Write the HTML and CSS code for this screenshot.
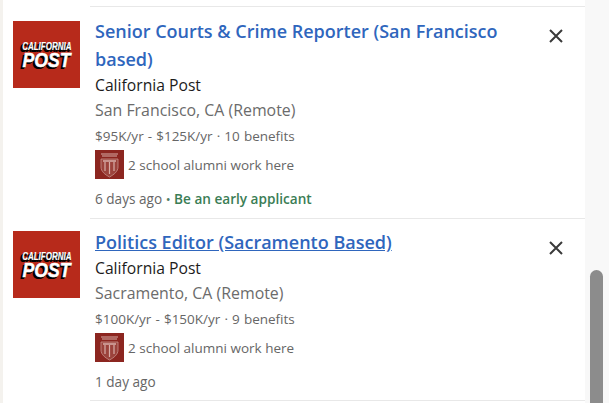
FILE: index.html
```html
<!DOCTYPE html>
<html lang="en">
<head>
<meta charset="utf-8">
<title>Jobs</title>
<link rel="stylesheet" href="styles.css">
</head>
<body>
<div class="pane">
  <main class="list">
    <article class="job">
      <div class="logo"><span class="logo-top">CALIFORNIA</span><span class="logo-main">POST</span></div>
      <div class="body">
        <h2 class="title"><a href="#">Senior Courts &amp; Crime Reporter (San Francisco based)</a></h2>
        <div class="company">California Post</div>
        <div class="location">San Francisco, CA (Remote)</div>
        <div class="meta">$95K/yr - $125K/yr · 10 benefits</div>
        <div class="alumni">
          <svg class="seal" viewBox="0 0 29 29"><rect width="29" height="29" fill="#8c2620"/><path d="M6 4h17M7 6h15" stroke="#bd8079" stroke-width="1.500"/><path d="M6 9h17v8c0 4.500-4 7.500-8.500 10C10 24.500 6 21.500 6 17z" fill="#9c433c" stroke="#c8928b" stroke-width=".8"/><path d="M8 11h13" stroke="#d8aea8" stroke-width="1.500"/><path d="M10 12v9M14.500 12v12M19 12v9" stroke="#d8aea8" stroke-width="1.200"/></svg>
          <span>2 school alumni work here</span>
        </div>
        <div class="foot">6 days ago <span class="dot">•</span> <strong>Be an early applicant</strong></div>
      </div>
      <svg class="close" viewBox="0 0 16 16"><path d="M2 2l12 12M14 2L2 14"/></svg>
    </article>
    <article class="job second">
      <div class="logo"><span class="logo-top">CALIFORNIA</span><span class="logo-main">POST</span></div>
      <div class="body">
        <h2 class="title"><a class="hover" href="#">Politics Editor (Sacramento Based)</a></h2>
        <div class="company">California Post</div>
        <div class="location">Sacramento, CA (Remote)</div>
        <div class="meta">$100K/yr - $150K/yr · 9 benefits</div>
        <div class="alumni">
          <svg class="seal" viewBox="0 0 29 29"><rect width="29" height="29" fill="#8c2620"/><path d="M6 4h17M7 6h15" stroke="#bd8079" stroke-width="1.500"/><path d="M6 9h17v8c0 4.500-4 7.500-8.500 10C10 24.500 6 21.500 6 17z" fill="#9c433c" stroke="#c8928b" stroke-width=".8"/><path d="M8 11h13" stroke="#d8aea8" stroke-width="1.500"/><path d="M10 12v9M14.500 12v12M19 12v9" stroke="#d8aea8" stroke-width="1.200"/></svg>
          <span>2 school alumni work here</span>
        </div>
        <div class="foot">1 day ago</div>
      </div>
      <svg class="close" viewBox="0 0 16 16"><path d="M2 2l12 12M14 2L2 14"/></svg>
    </article>
  </main>
  <div class="track"><div class="thumb"></div></div>
</div>
</body>
</html>
```
FILE: styles.css
```css
* { box-sizing: border-box; }
html, body { margin: 0; height: 100%; overflow: hidden; }
body { background: #f4f2ee; font-family: "Open Sans", "Noto Sans", sans-serif; color: #000; }
.pane { display: flex; height: 403px; width: 609px; margin-left: 3px; background: #fff; }
.list { width: 582px; padding-top: 6px; }
.job { position: relative; height: 212px; padding: 15px 0 0 10px; display: flex; align-items: flex-start; }
.job::before { content: ""; position: absolute; top: 0; left: 87px; right: 0; height: 1px; background: #e8e8e8; }
.second { height: 183px; padding-top: 13px; }
.second::after { content: ""; position: absolute; top: 182px; left: 87px; right: 0; height: 1px; background: #e8e8e8; }
.logo { width: 67px; height: 67px; flex: none; background: #b72a1b; color: #fff; display: flex; flex-direction: column; align-items: center; justify-content: center; font-family: "Liberation Sans", sans-serif; font-weight: 700; font-style: italic; text-shadow: -1px 1px 0 #000, -2px 2px 0 #000, -3px 2px 0 #000; line-height: 1; }
.logo-top { font-size: 10px; line-height: 9px; transform: scaleX(.8); -webkit-text-stroke: .2px #fff; }
.logo-main { font-size: 21px; line-height: 17px; transform: scaleX(.84); -webkit-text-stroke: .5px #fff; }
.body { margin-left: 15px; width: 420px; flex: none; }
.second .body { margin-top: 1px; }
.title { margin: -4px 0 0; font-size: 18px; line-height: 28px; font-weight: 600; }
.title a { color: #2f66bd; text-decoration: none; }
.title a.hover { text-decoration: underline; }
.company { font-size: 15.700px; line-height: 24px; color: #1c1c1c; }
.location { font-size: 15.900px; line-height: 27px; color: #6b6b6b; }
.meta { font-size: 13.500px; line-height: 26px; color: #666; word-spacing: .6px; margin-top: -1px; margin-bottom: 1px; }
.alumni { display: flex; align-items: center; gap: 4px; font-size: 13.500px; color: #666; margin-top: 1px; height: 29px; }
.second .alumni { margin-top: 0; }
.seal { width: 29px; height: 29px; flex: none; }
.foot { font-size: 13.600px; line-height: 20px; color: #666; margin-top: 10px; }
.dot { color: #4f7d63; font-size: 13px; }
.foot strong { color: #3a7d55; font-weight: 600; }
.close { position: absolute; top: 22px; right: 21px; width: 16px; height: 16px; fill: none; stroke: #3a3a3a; stroke-width: 2; }
.track { width: 24px; flex: none; background: #f8f8f8; padding: 270px 6px 0 5px; }
.thumb { height: 133px; background: #8c8c8c; border-radius: 7px 7px 0 0; }
```
